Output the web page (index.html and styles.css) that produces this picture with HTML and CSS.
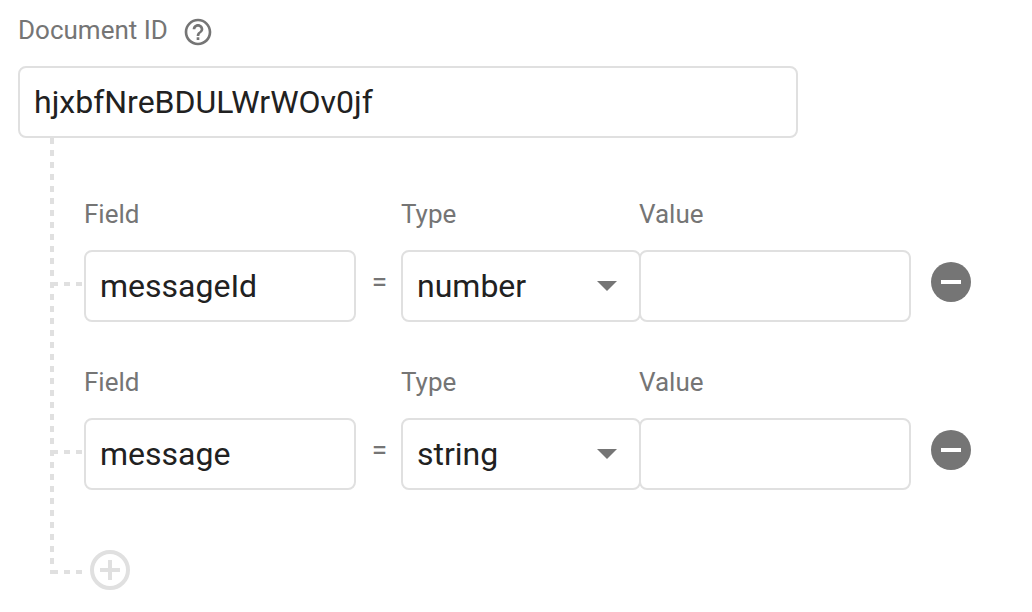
FILE: index.html
```html
<!DOCTYPE html>
<html lang="en">
<head>
<meta charset="utf-8">
<meta name="viewport" content="width=device-width, initial-scale=1">
<title>Add a document</title>
<link rel="stylesheet" href="styles.css">
</head>
<body>
<form class="editor">
  <div class="doc-header">
    <label class="label" for="doc-id">Document ID</label>
    <button class="icon-button help" type="button" aria-label="Help">
      <svg viewBox="1.5 1.5 21 21" width="28" height="28" fill="currentColor">
        <path d="M11 18h2v-2h-2v2zm1-16C6.48 2 2 6.48 2 12s4.48 10 10 10 10-4.48 10-10S17.52 2 12 2zm0 18c-4.41 0-8-3.59-8-8s3.590-8 8-8 8 3.590 8 8-3.590 8-8 8zm0-14c-2.210 0-4 1.790-4 4h2c0-1.100.9-2 2-2s2 .9 2 2c0 2-3 1.750-3 5h2c0-2.250 3-2.500 3-5 0-2.210-1.790-4-4-4z"/>
      </svg>
    </button>
  </div>
  <input class="box doc-id" id="doc-id" type="text" value="hjxbfNreBDULWrWOv0jf">

  <div class="tree">
    <div class="trunk"></div>
    <div class="branches">
      <div class="row">
        <span class="twig"></span>
        <div class="cell">
          <label class="label" for="field-1">Field</label>
          <input class="box" id="field-1" type="text" value="messageId">
        </div>
        <span class="equals">=</span>
        <div class="cell">
          <label class="label" for="type-1">Type</label>
          <select class="box type" id="type-1"><option>number</option><option>string</option></select>
        </div>
        <div class="cell value">
          <label class="label" for="value-1">Value</label>
          <input class="box" id="value-1" type="text">
        </div>
        <button class="icon-button remove" type="button" aria-label="Remove field">
          <svg viewBox="0 0 40 40" width="40" height="40"><circle cx="20" cy="20" r="20" fill="currentColor"/><path d="M10 18h20v4H10z" fill="#fff"/></svg>
        </button>
      </div>
      <div class="row">
        <span class="twig"></span>
        <div class="cell">
          <label class="label" for="field-2">Field</label>
          <input class="box" id="field-2" type="text" value="message">
        </div>
        <span class="equals">=</span>
        <div class="cell">
          <label class="label" for="type-2">Type</label>
          <select class="box type" id="type-2"><option>string</option><option>number</option></select>
        </div>
        <div class="cell value">
          <label class="label" for="value-2">Value</label>
          <input class="box" id="value-2" type="text">
        </div>
        <button class="icon-button remove" type="button" aria-label="Remove field">
          <svg viewBox="0 0 40 40" width="40" height="40"><circle cx="20" cy="20" r="20" fill="currentColor"/><path d="M10 18h20v4H10z" fill="#fff"/></svg>
        </button>
      </div>
      <div class="add-row">
        <span class="twig"></span>
        <button class="icon-button add" type="button" aria-label="Add field">
          <svg viewBox="0 0 40 40" width="40" height="40" fill="none" stroke="currentColor" stroke-width="4"><circle cx="20" cy="20" r="18"/><path d="M20 10v20M10 20h20"/></svg>
        </button>
      </div>
    </div>
  </div>
</form>
</body>
</html>
```

FILE: styles.css
```css
:root {
  --line: #e0e0e0;
  --muted: #757575;
  --text: #212121;
}

* {
  box-sizing: border-box;
}

body {
  margin: 0;
  background: #fff;
  color: var(--text);
  font-family: Roboto, "Liberation Sans", sans-serif;
}

.editor {
  padding: 14px 18px;
}

.doc-header {
  display: flex;
  align-items: flex-end;
  gap: 16px;
  padding-bottom: 20px;
}

.label {
  color: var(--muted);
  font-size: 26px;
  line-height: 32px;
}

.icon-button {
  display: flex;
  padding: 0;
  border: 0;
  background: none;
  color: var(--muted);
  cursor: pointer;
}

.box {
  display: block;
  width: 100%;
  height: 72px;
  padding: 0 14px;
  border: 2px solid var(--line);
  border-radius: 8px;
  background-color: transparent;
  color: var(--text);
  font-family: inherit;
  font-size: 32px;
}

.doc-id {
  max-width: 780px;
}

.type {
  appearance: none;
  background-image: url("data:image/svg+xml,%3Csvg xmlns='http://www.w3.org/2000/svg' width='20' height='10' viewBox='0 0 20 10'%3E%3Cpath d='M0 0h20L10 10z' fill='%23757575'/%3E%3C/svg%3E");
  background-position: right 22px center;
  background-repeat: no-repeat;
}

.tree {
  display: flex;
  padding-left: 32px;
}

.trunk {
  width: 4px;
  margin-bottom: 16px;
  background: repeating-linear-gradient(to bottom, var(--line) 0 6px, transparent 6px 12px);
}

.branches {
  flex: 1;
  min-width: 0;
  padding-top: 60px;
}

.row {
  display: grid;
  grid-template-columns: 30px minmax(0, 272px) 45px minmax(0, 240px) minmax(0, 270px) auto;
  align-items: end;
  margin-bottom: 44px;
}

.cell {
  display: grid;
  gap: 20px;
}

.value {
  margin-left: -2px;
}

.twig {
  width: 30px;
  height: 4px;
  background: repeating-linear-gradient(to right, var(--line) 0 4px, transparent 4px 10px, var(--line) 10px 12px);
}

.row .twig {
  margin-bottom: 36px;
}

.equals {
  padding: 0 0 22px 2px;
  color: var(--muted);
  font-size: 28px;
  line-height: 36px;
  text-align: center;
}

.remove {
  margin: 0 0 20px 20px;
}

.add-row {
  display: flex;
  align-items: flex-end;
  gap: 6px;
  padding-top: 16px;
  color: var(--line);
}

.add-row .twig {
  margin-bottom: 16px;
}

.add {
  color: inherit;
}
```
